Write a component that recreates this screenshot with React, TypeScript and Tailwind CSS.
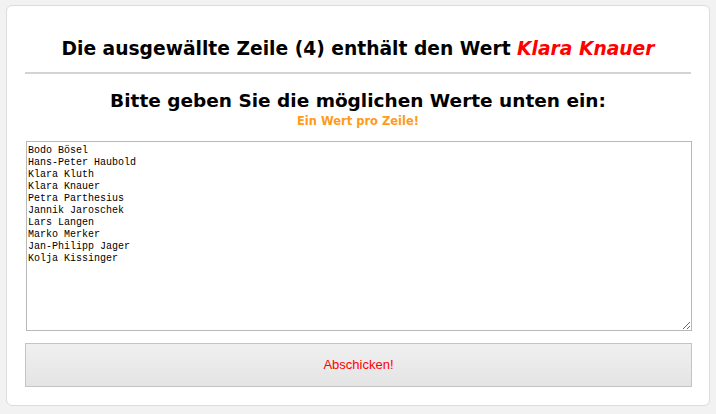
const names = [
  "Bodo Bösel",
  "Hans-Peter Haubold",
  "Klara Kluth",
  "Klara Knauer",
  "Petra Parthesius",
  "Jannik Jaroschek",
  "Lars Langen",
  "Marko Merker",
  "Jan-Philipp Jager",
  "Kolja Kissinger",
];

export default function App() {
  return (
    <div className="w-[716px] h-[414px] bg-[#f2f2f2] pt-[5px] pl-[6px]">
      <div className="w-[704px] h-[401px] bg-white border border-[#dcdcdc] rounded-[6px] px-[18px] pt-[28px] font-['DejaVu_Sans',sans-serif]">
        <h1 className="text-center font-bold text-[18.7px] leading-[30px] text-black">
          Die ausgewällte Zeile (4) enthält den Wert{" "}
          <span className="italic text-[#ff0000]">Klara Knauer</span>
        </h1>
        <hr className="mt-[8px] border-t-2 border-[#d4d4d4]" />
        <h2 className="mt-[13px] text-center font-bold text-[18.5px] leading-[28px] text-black">
          Bitte geben Sie die möglichen Werte unten ein:
        </h2>
        <p className="text-center font-bold text-[11.5px] leading-[12px] text-[#ff9a1a]">
          Ein Wert pro Zeile!
        </p>
        <textarea
          className="mt-[14px] ml-[1px] block w-[666px] h-[190px] border border-[#b8b8b8] bg-white px-[1px] pt-[3px] pb-[1px] font-['Liberation_Mono',monospace] text-[10px] leading-[12px] text-black resize-y outline-none"
          defaultValue={names.join("\n")}
        />
        <button className="mt-[12px] block w-[667px] h-[44px] border border-[#c4c4c4] bg-gradient-to-b from-[#f0f0f0] to-[#e4e4e4] font-['Liberation_Sans',sans-serif] text-[13px] text-[#ff0000]">
          Abschicken!
        </button>
      </div>
    </div>
  );
}
